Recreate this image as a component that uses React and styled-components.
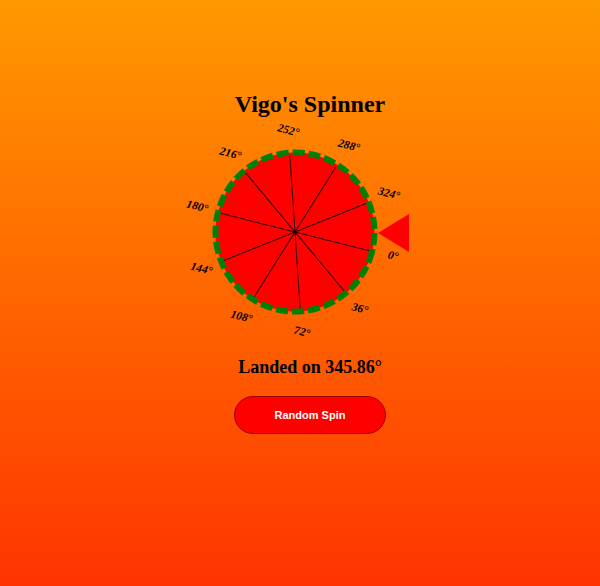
import React from 'react';
import styled, {createGlobalStyle} from 'styled-components';

const GlobalStyle = createGlobalStyle`
  html, body {
    margin: 0;
    padding: 0;
  }
  body {
    font-family: "Liberation Serif", "Times New Roman", serif;
  }
`;

const landed = 345.86;
const rotation = 360 - landed;
const SIZE = 260;
const C = SIZE / 2;
const R = 79.5;

export default function App() {
  const ticks = [0, 36, 72, 108, 144, 180, 216, 252, 288, 324];

  return (
    <>
      <GlobalStyle />
      <Page>
        <Title>Vigo's Spinner</Title>

        <WheelArea>
          <svg width={SIZE} height={SIZE} viewBox={`0 0 ${SIZE} ${SIZE}`}>
            <g transform={`rotate(${rotation} ${C} ${C})`}>
              <circle cx={C} cy={C} r={R} fill="#ff0000" />
              <circle
                cx={C}
                cy={C}
                r={R}
                fill="none"
                stroke="#008000"
                strokeWidth="6"
                strokeDasharray="12 4"
              />
              {ticks.map(t => {
                const a = (t * Math.PI) / 180;
                return (
                  <line
                    key={t}
                    x1={C}
                    y1={C}
                    x2={C + Math.cos(a) * (R - 3)}
                    y2={C + Math.sin(a) * (R - 3)}
                    stroke="#2a0000"
                    strokeWidth="1"
                  />
                );
              })}
              <circle cx={C} cy={C} r="1.8" fill="#000" />
              {ticks.map(t => {
                const a = (t * Math.PI) / 180;
                const x = C + Math.cos(a) * 101;
                const y = C + Math.sin(a) * 101;
                return (
                  <TickLabel
                    key={t}
                    x={x}
                    y={y}
                    textAnchor="middle"
                    dominantBaseline="middle"
                  >
                    {t}°
                  </TickLabel>
                );
              })}
            </g>
          </svg>
          <Pointer />
        </WheelArea>

        <Result>Landed on {landed}°</Result>

        <SpinButton>Random Spin</SpinButton>
      </Page>
    </>
  );
}

// Custom styles

const Page = styled.div`
  width: 600px;
  height: 586px;
  box-sizing: border-box;
  background: linear-gradient(to bottom, #ff9900, #ff3300);
  display: flex;
  flex-direction: column;
  align-items: center;
  padding-top: 89px;
  padding-left: 20px;
`;

const Title = styled.h1`
  margin: 0;
  font-size: 24px;
  font-weight: bold;
  color: #000;
  line-height: 30px;
`;

const WheelArea = styled.div`
  position: relative;
  width: ${SIZE}px;
  height: ${SIZE}px;
  margin: -17px 30px 0 0;
`;

const Pointer = styled.div`
  position: absolute;
  left: 213px;
  top: 112px;
  width: 0;
  height: 0;
  border-top: 19px solid transparent;
  border-bottom: 19px solid transparent;
  border-right: 31px solid #ff0000;
`;

const TickLabel = styled.text`
  font-family: "Liberation Serif", "Times New Roman", serif;
  font-style: italic;
  font-weight: bold;
  font-size: 11.5px;
  fill: #000;
`;

const Result = styled.h3`
  margin: -6px 0 0;
  font-size: 18px;
  font-weight: bold;
  line-height: 22px;
`;

const SpinButton = styled.button`
  margin-top: 18px;
  width: 152px;
  height: 38px;
  border-radius: 19px;
  background: #ff0000;
  border: 1px solid #a00000;
  color: #fff;
  font-family: "Liberation Sans", Arial, sans-serif;
  font-weight: bold;
  font-size: 11px;
  cursor: pointer;
`;
